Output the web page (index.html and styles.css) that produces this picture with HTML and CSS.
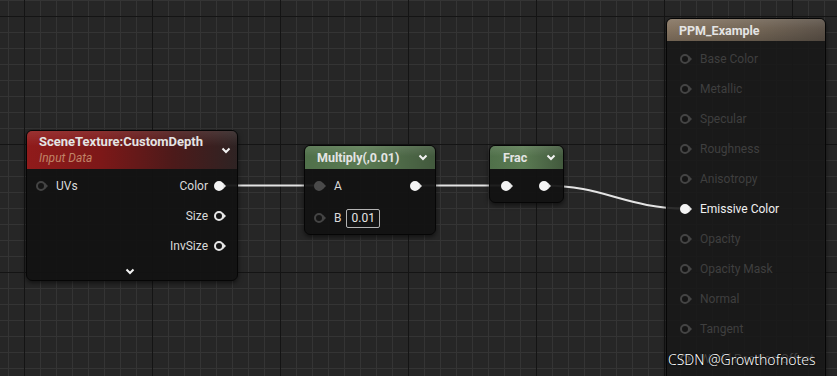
FILE: index.html
```html
<!DOCTYPE html>
<html lang="en">
<head>
    <meta charset="UTF-8">
    <title>Material Graph</title>
    <link rel="stylesheet" href="styles.css">
</head>
<body>
    <div class="graph">
        <svg class="wires" width="837" height="376" viewBox="0 0 837 376">
            <path d="M224 185.5 H320" />
            <path d="M415 185.5 H506" />
            <path d="M544 185.5 C604 185.5 626 208.5 686 208.5" />
        </svg>

        <div class="node scene">
            <div class="node-head">
                <div>
                    <div class="title">SceneTexture:CustomDepth</div>
                    <div class="subtitle">Input Data</div>
                </div>
                <svg class="chev" width="10" height="7" viewBox="0 0 10 7"><path d="M1.5 1.5 L5 5 L8.5 1.5" /></svg>
            </div>
            <div class="node-body">
                <div class="row split">
                    <div class="pin-in"><span class="pin dim"></span>UVs</div>
                    <div class="pin-out">Color<span class="pin on"></span></div>
                </div>
                <div class="row end">
                    <div class="pin-out">Size<span class="pin"></span></div>
                </div>
                <div class="row end">
                    <div class="pin-out">InvSize<span class="pin"></span></div>
                </div>
                <div class="more">
                    <svg class="chev" width="10" height="7" viewBox="0 0 10 7"><path d="M1.5 1.5 L5 5 L8.5 1.5" /></svg>
                </div>
            </div>
        </div>

        <div class="node multiply">
            <div class="node-head green">
                <div class="title">Multiply(,0.01)</div>
                <svg class="chev" width="10" height="7" viewBox="0 0 10 7"><path d="M1.5 1.5 L5 5 L8.5 1.5" /></svg>
            </div>
            <div class="node-body">
                <div class="row split">
                    <div class="pin-in"><span class="pin grey"></span>A</div>
                    <span class="pin on"></span>
                </div>
                <div class="row row-b">
                    <div class="pin-in"><span class="pin dim"></span>B</div>
                    <span class="value">0.01</span>
                </div>
            </div>
        </div>

        <div class="node frac">
            <div class="node-head green">
                <div class="title">Frac</div>
                <svg class="chev" width="10" height="7" viewBox="0 0 10 7"><path d="M1.5 1.5 L5 5 L8.5 1.5" /></svg>
            </div>
            <div class="node-body">
                <div class="row split">
                    <span class="pin on"></span>
                    <span class="pin on"></span>
                </div>
            </div>
        </div>

        <div class="node result">
            <div class="node-head tan">
                <div class="title">PPM_Example</div>
            </div>
            <div class="node-body">
                <div class="row off"><div class="pin-in"><span class="pin dim"></span>Base Color</div></div>
                <div class="row off"><div class="pin-in"><span class="pin dim"></span>Metallic</div></div>
                <div class="row off"><div class="pin-in"><span class="pin dim"></span>Specular</div></div>
                <div class="row off"><div class="pin-in"><span class="pin dim"></span>Roughness</div></div>
                <div class="row off"><div class="pin-in"><span class="pin dim"></span>Anisotropy</div></div>
                <div class="row"><div class="pin-in"><span class="pin on"></span>Emissive Color</div></div>
                <div class="row off"><div class="pin-in"><span class="pin dim"></span>Opacity</div></div>
                <div class="row off"><div class="pin-in"><span class="pin dim"></span>Opacity Mask</div></div>
                <div class="row off"><div class="pin-in"><span class="pin dim"></span>Normal</div></div>
                <div class="row off"><div class="pin-in"><span class="pin dim"></span>Tangent</div></div>
                <div class="row off"><div class="pin-in"><span class="pin dim"></span>World Position Offset</div></div>
            </div>
        </div>

        <div class="watermark">CSDN @Growthofnotes</div>
    </div>
</body>
</html>
```

FILE: styles.css
```css
* {
    box-sizing: border-box;
}
body {
    margin: 0;
    background: #262626;
    font-family: Roboto, "Liberation Sans", sans-serif;
}
.graph {
    position: relative;
    width: 837px;
    height: 376px;
    overflow: hidden;
    background-color: #262626;
    background-image:
        linear-gradient(to right, #141414 1px, transparent 1px),
        linear-gradient(to bottom, #141414 1px, transparent 1px),
        linear-gradient(to right, #343434 1px, transparent 1px),
        linear-gradient(to bottom, #343434 1px, transparent 1px);
    background-size: 128px 128px, 128px 128px, 16px 16px, 16px 16px;
    background-position: 24px 0, 0 16px, 8px 0, 0 0;
}
.wires {
    position: absolute;
    left: 0;
    top: 0;
}
.wires path {
    fill: none;
    stroke: #e4e4e4;
    stroke-width: 2;
}

/* nodes */
.node {
    position: absolute;
    background: rgba(18, 18, 18, 0.94);
    border: 1px solid #060606;
    border-radius: 6px;
    box-shadow: 0 2px 5px rgba(0, 0, 0, 0.55);
    color: #dadada;
    font-size: 12px;
}
.node-head {
    display: flex;
    align-items: center;
    justify-content: space-between;
    border-radius: 5px 5px 0 0;
}
.title {
    font-size: 12.5px;
    font-weight: 700;
    line-height: 15px;
    color: #e4e4e4;
}
.subtitle {
    margin-top: 2px;
    font-size: 12px;
    font-style: italic;
    line-height: 15px;
    color: #c08468;
}
.chev path {
    fill: none;
    stroke: #f2f2f2;
    stroke-width: 2;
}
.green {
    background:
        linear-gradient(to bottom, rgba(255, 255, 255, 0.1), rgba(255, 255, 255, 0) 45%),
        linear-gradient(to right, #50704a, #5b7b53 45%, #42593d);
}
.tan {
    background:
        linear-gradient(to bottom, rgba(255, 255, 255, 0.1), rgba(255, 255, 255, 0) 45%, rgba(0, 0, 0, 0.15)),
        linear-gradient(to right, #857461, #716455 60%, #5c5248);
}
.row {
    display: flex;
    align-items: center;
    height: 30px;
}
.split {
    justify-content: space-between;
}
.end {
    justify-content: flex-end;
}
.pin-in {
    display: flex;
    align-items: center;
    gap: 10px;
}
.pin-out {
    display: flex;
    align-items: center;
    gap: 6px;
}

/* pins */
.pin {
    position: relative;
    flex: none;
    width: 10px;
    height: 10px;
    border: 2px solid #e6e6e6;
    border-radius: 50%;
    background: #151515;
}
.pin::after {
    content: "";
    position: absolute;
    left: 7px;
    top: 0;
    border-left: 3px solid #e6e6e6;
    border-top: 3px solid transparent;
    border-bottom: 3px solid transparent;
}
.pin.on {
    background: #f4f4f4;
    border-color: #f4f4f4;
}
.pin.grey {
    background: #4a4a4a;
    border-color: #4a4a4a;
}
.pin.grey::after {
    border-left-color: #4a4a4a;
}
.pin.dim {
    border-color: #444;
}
.pin.dim::after {
    border-left-color: #444;
}

/* SceneTexture */
.scene {
    left: 26px;
    top: 130px;
    width: 212px;
    height: 151px;
}
.scene .title {
    font-size: 13px;
}
.scene .node-head {
    height: 38px;
    padding: 0 6px 0 12px;
    background:
        linear-gradient(to bottom, rgba(255, 255, 255, 0.1), rgba(255, 255, 255, 0) 40%),
        linear-gradient(to right, #901b1b, #7d1818 35%, #4c1a1a 70%, #2e2323);
}
.scene .node-body {
    padding: 2px 13px 0 9px;
}
.more {
    display: flex;
    justify-content: center;
    align-items: center;
    height: 21px;
}

/* Multiply */
.multiply {
    left: 304px;
    top: 145px;
    width: 132px;
    height: 90px;
}
.multiply .node-head,
.frac .node-head {
    height: 23px;
    padding: 0 7px 0 12px;
}
.multiply .node-body {
    padding: 2px 15px 0 9px;
}
.row-b {
    height: 28px;
    margin-top: 3px;
    gap: 5px;
}
.value {
    height: 19px;
    padding: 0 4px;
    border: 1px solid #b4b4b4;
    border-radius: 2px;
    line-height: 17px;
    color: #e6e6e6;
}

/* Frac */
.frac {
    left: 489px;
    top: 145px;
    width: 75px;
    height: 58px;
}
.frac .node-head {
    padding-left: 13px;
}
.frac .node-body {
    padding: 2px 14px 0 11px;
}

/* material result */
.result {
    left: 666px;
    top: 18px;
    width: 160px;
    height: 380px;
    background: rgba(24, 24, 24, 0.9);
}
.result .node-head {
    height: 22px;
    padding: 0 12px;
}
.result .node-body {
    padding: 3px 0 0 13px;
}
.result .row {
    color: #f0f0f0;
}
.result .row.off {
    color: #3f3f3f;
}

.watermark {
    position: absolute;
    left: 668px;
    top: 350px;
    font-family: "Noto Sans", sans-serif;
    font-size: 14px;
    font-weight: 300;
    color: #fff;
    text-shadow: 0 0 2px #000, 0 0 1px #000;
}
```
